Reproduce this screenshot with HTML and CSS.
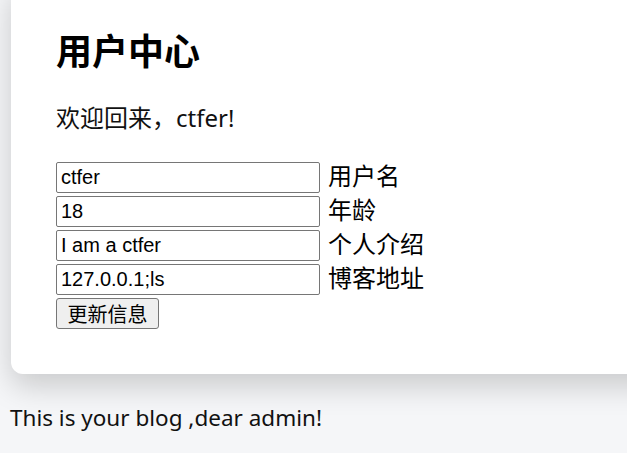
FILE: index.html
```html
<!DOCTYPE html>
<html lang="zh-CN">
<head>
<meta charset="utf-8">
<title>用户中心</title>
<link rel="stylesheet" href="styles.css">
</head>
<body>
<main class="card">
  <h1 class="title">用户中心</h1>
  <p class="welcome">欢迎回来，ctfer!</p>
  <form class="profile">
    <div class="row"><input class="field" type="text" value="ctfer"><label class="label">用户名</label></div>
    <div class="row"><input class="field" type="text" value="18"><label class="label">年龄</label></div>
    <div class="row"><input class="field" type="text" value="I am a ctfer"><label class="label">个人介绍</label></div>
    <div class="row"><input class="field" type="text" value="127.0.0.1;ls"><label class="label">博客地址</label></div>
    <div class="actions"><button class="submit" type="button">更新信息</button></div>
  </form>
</main>
<p class="note">This is your blog ,dear admin!</p>
</body>
</html>
```
FILE: styles.css
```css
html, body {
  margin: 0;
  padding: 0;
}
body {
  background: #f5f6f8;
  font-family: "Noto Sans", "Noto Sans CJK SC", sans-serif;
  color: #111;
  overflow: hidden;
}
.card {
  background: #fff;
  margin: -20px -40px 0 11px;
  padding: 45px 45px 45px 45px;
  border-radius: 12px;
  box-shadow: 0 12px 30px rgba(0, 0, 0, 0.18);
}
.title {
  margin: 0;
  font-family: "Noto Sans CJK SC", sans-serif;
  font-size: 36px;
  line-height: 48px;
  font-weight: 700;
  color: #000;
}
.welcome {
  margin: 28px 0 0;
  font-size: 24px;
  line-height: 34px;
}
.profile {
  margin-top: 27px;
  display: flex;
  flex-direction: column;
  gap: 3px;
}
.row {
  display: flex;
  align-items: flex-start;
  height: 31px;
}
.field {
  box-sizing: border-box;
  width: 264px;
  height: 31px;
  margin: 0;
  padding: 0 4px;
  border: 1px solid #767676;
  border-radius: 2px;
  font-family: "Liberation Sans", Arial, sans-serif;
  font-size: 20px;
  color: #000;
  background: #fff;
}
.label {
  margin-left: 8px;
  font-family: "Noto Sans CJK SC", sans-serif;
  font-size: 24px;
  line-height: 25px;
  color: #000;
}
.actions {
  display: flex;
}
.submit {
  box-sizing: border-box;
  width: 103px;
  height: 31px;
  margin: 0;
  padding: 0;
  border: 1px solid #767676;
  border-radius: 3px;
  background: #efefef;
  font-family: "Noto Sans CJK SC", sans-serif;
  font-size: 20px;
  color: #000;
}
.note {
  margin: 27px 0 0 10px;
  font-size: 22.5px;
  line-height: 33px;
  color: #111;
}
```
